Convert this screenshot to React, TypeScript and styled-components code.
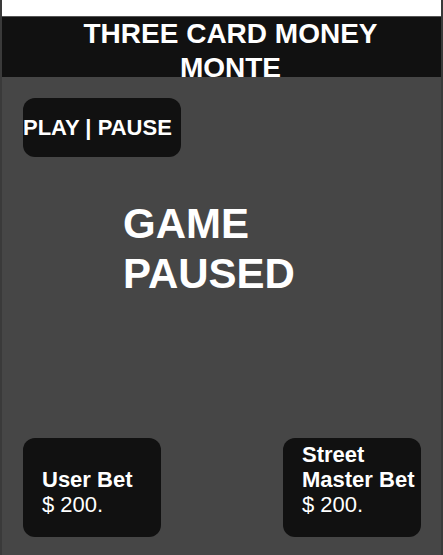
import styled, { createGlobalStyle } from 'styled-components'

const GlobalStyle = createGlobalStyle`
  html, body {
    margin: 0;
    padding: 0;
    background: #ffffff;
  }
  body {
    font-family: "Liberation Sans", Arial, sans-serif;
  }
`

const App = () => {
  return (
    <Frame>
      <GlobalStyle />
      <TopStrip />
      <Header>
        <Title>THREE CARD MONEY MONTE</Title>
      </Header>
      <Board>
        <PlayButton>PLAY | PAUSE</PlayButton>
        <Message>GAME PAUSED</Message>
        <Spacer />
        <BetRow>
          <BetCard>
            <BetLabel>User Bet</BetLabel>
            <BetAmount>$ 200.</BetAmount>
          </BetCard>
          <BetCard>
            <BetLabel>Street Master Bet</BetLabel>
            <BetAmount>$ 200.</BetAmount>
          </BetCard>
        </BetRow>
      </Board>
    </Frame>
  )
}

export default App

const Frame = styled.div`
  display: flex;
  flex-direction: column;
  width: 443px;
  height: 555px;
  box-sizing: border-box;
  border-left: 2px solid #3a3a3a;
  border-right: 2px solid #3a3a3a;
  overflow: hidden;
`

const TopStrip = styled.div`
  height: 16px;
  background: #ffffff;
  border-bottom: 1px solid #555555;
`

const Header = styled.div`
  height: 60px;
  background: #111111;
  padding: 0 22px 0 40px;
  overflow: hidden;
`

const Title = styled.h1`
  margin: 0;
  color: #ffffff;
  font-size: 28px;
  font-weight: 700;
  line-height: 34px;
  text-align: center;
`

const Board = styled.div`
  flex: 1;
  display: flex;
  flex-direction: column;
  align-items: flex-start;
  background: #464646;
  padding: 21px 20px 18px 21px;
`

const PlayButton = styled.button`
  width: 158px;
  height: 59px;
  padding: 0;
  border: none;
  border-radius: 12px;
  background: #111111;
  color: #ffffff;
  font-family: "Liberation Sans", Arial, sans-serif;
  font-size: 22px;
  font-weight: 700;
  text-align: left;
  white-space: nowrap;
  cursor: pointer;
`

const Message = styled.h2`
  margin: 42px 0 0 100px;
  max-width: 220px;
  color: #ffffff;
  font-size: 42px;
  font-weight: 700;
  line-height: 50px;
`

const Spacer = styled.div`
  flex: 1;
`

const BetRow = styled.div`
  align-self: stretch;
  display: flex;
  justify-content: space-between;
`

const BetCard = styled.div`
  width: 138px;
  height: 99px;
  box-sizing: border-box;
  display: flex;
  flex-direction: column;
  justify-content: flex-end;
  padding: 0 4px 20px 19px;
  border-radius: 12px;
  background: #111111;
  color: #ffffff;
  font-size: 22px;
  line-height: 25px;
`

const BetLabel = styled.div`
  font-weight: 700;
`

const BetAmount = styled.div`
  font-weight: 400;
`
